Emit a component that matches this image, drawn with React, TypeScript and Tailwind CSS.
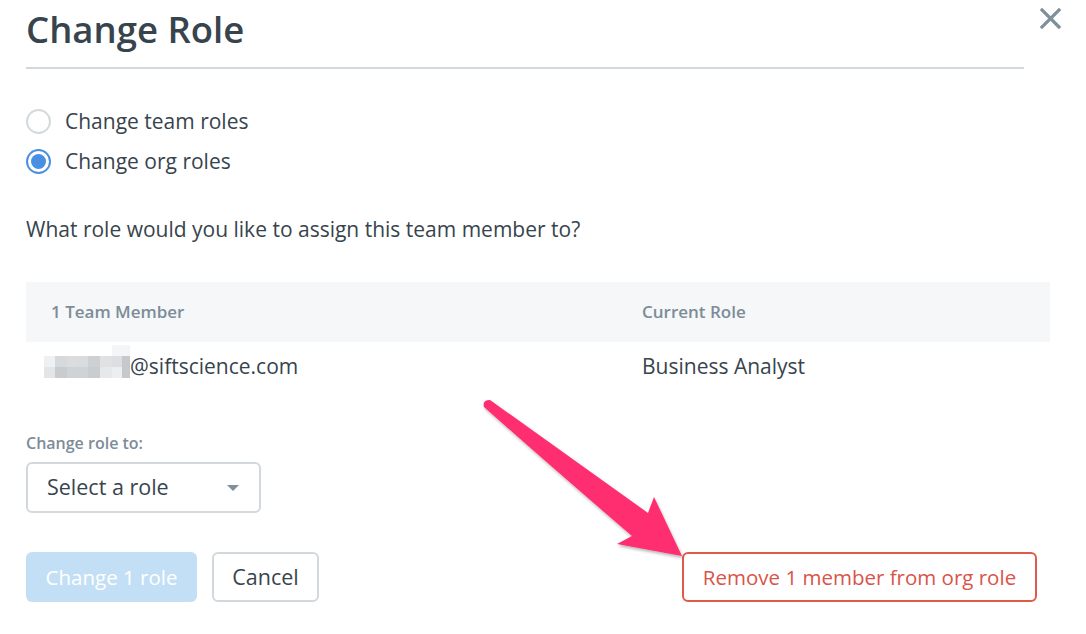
import React from 'react';

const mosaic = [
	['#ffffff', '#ffffff', '#ffffff', '#ffffff', '#ffffff', '#ffffff', '#f4f5f6', '#f4f5f6'],
	['#eef0f1', '#d7dadc', '#dadcde', '#d9dbdd', '#cdd1d4', '#dfe1e3', '#dcdee0', '#c5c9cc'],
	['#e3e5e6', '#c8ccce', '#d0d3d5', '#d0d3d5', '#c9cdcf', '#e7e8e9', '#eceeef', '#c5c9cc'],
];
const cellW = [11, 12, 11, 10, 12, 12, 10, 8];

function Radio({ checked, label }: { checked?: boolean; label: string }) {
	return (
		<label className="flex h-[40px] items-center gap-[14px] cursor-pointer">
			{checked ? (
				<span className="flex h-[25px] w-[25px] items-center justify-center rounded-full border-2 border-[#4a90e2] bg-white">
					<span className="h-[15px] w-[15px] rounded-full bg-[#4a90e2]" />
				</span>
			) : (
				<span className="h-[25px] w-[25px] rounded-full border-2 border-[#d4d9dd] bg-white" />
			)}
			<span className="text-[21px] leading-[28px] text-[#37444d]">{label}</span>
		</label>
	);
}

export default function App() {
	return (
		<div
			className="relative h-[634px] w-[1086px] overflow-hidden bg-white pl-[26px]"
			style={{ fontFamily: '"Open Sans", "Liberation Sans", sans-serif' }}
		>
			{/* header */}
			<div className="flex items-start">
				<div className="w-[998px]">
					<h1 className="pt-[5px] text-[36.5px] font-semibold leading-[48px] text-[#37444d]">Change Role</h1>
					<div className="mt-[14px] h-[2px] bg-[#d3d8dc]" />
				</div>
				<button className="ml-[16px] mt-[8px] text-[#7f909b]">
					<svg width="21" height="21" viewBox="0 0 21 21">
						<path d="M2 2 L19 19 M19 2 L2 19" stroke="currentColor" strokeWidth="3.2" strokeLinecap="square" />
					</svg>
				</button>
			</div>

			<div className="mt-[32px] flex flex-col">
				<Radio label="Change team roles" />
				<Radio checked label="Change org roles" />
			</div>

			<p className="mt-[34px] text-[21px] leading-[28px] text-[#37444d]">
				What role would you like to assign this team member to?
			</p>

			{/* table */}
			<div className="mt-[39px] w-[1024px]">
				<div className="grid h-[60px] grid-cols-[616px_1fr] items-center bg-[#f5f7f9] text-[17px] font-semibold text-[#7d8c97]">
					<div className="pl-[25px]">1 Team Member</div>
					<div>Current Role</div>
				</div>
				<div className="grid h-[50px] grid-cols-[616px_1fr] items-center text-[21px] text-[#37444d]">
					<div className="flex items-center pl-[18px]">
						<div className="mb-[11px] flex flex-col">
							{mosaic.map((row, r) => (
								<div key={r} className="flex h-[11px]">
									{row.map((c, i) => (
										<span key={i} style={{ width: cellW[i], backgroundColor: c }} />
									))}
								</div>
							))}
						</div>
						<span>@siftscience.com</span>
					</div>
					<div>Business Analyst</div>
				</div>
			</div>

			<div className="mt-[39px] text-[16px] font-semibold leading-[24px] text-[#7d8c97]">Change role to:</div>
			<button className="mt-[7px] flex h-[51px] w-[235px] items-center justify-between rounded-[6px] border-2 border-[#d3d8dc] bg-white pl-[19px] pr-[20px] text-[21.5px] text-[#37444d]">
				<span>Select a role</span>
				<svg width="12" height="6" viewBox="0 0 12 6">
					<path d="M0 0 H12 L6 6 Z" fill="#7f909b" />
				</svg>
			</button>

			<div className="mt-[39px] flex w-[1011px] items-center">
				<button className="h-[50px] w-[171px] rounded-[6px] bg-[#c3dff6] text-[20.5px] text-white">Change 1 role</button>
				<button className="ml-[15px] h-[50px] w-[107px] rounded-[6px] border-2 border-[#d3d8dc] bg-white text-[21.5px] text-[#37444d]">
					Cancel
				</button>
				<button className="ml-auto h-[50px] w-[355px] rounded-[6px] border-2 border-[#e05a4a] bg-white text-[20.5px] text-[#d9544a]">
					Remove 1 member from org role
				</button>
			</div>

			{/* annotation arrow */}
			<svg className="pointer-events-none absolute left-0 top-0" width="1086" height="634" viewBox="0 0 1086 634">
				<defs>
					<filter id="sh" x="-10%" y="-10%" width="130%" height="130%">
						<feDropShadow dx="1" dy="2" stdDeviation="1.5" floodColor="#000" floodOpacity="0.3" />
					</filter>
				</defs>
				<path
					d="M484 407 Q482 400 490 400 L648 513 L654 497 L682 556 L617 544 L632 536 Q555 470 484 407 Z"
					fill="#ff2d6f"
					filter="url(#sh)"
				/>
			</svg>
		</div>
	);
}
